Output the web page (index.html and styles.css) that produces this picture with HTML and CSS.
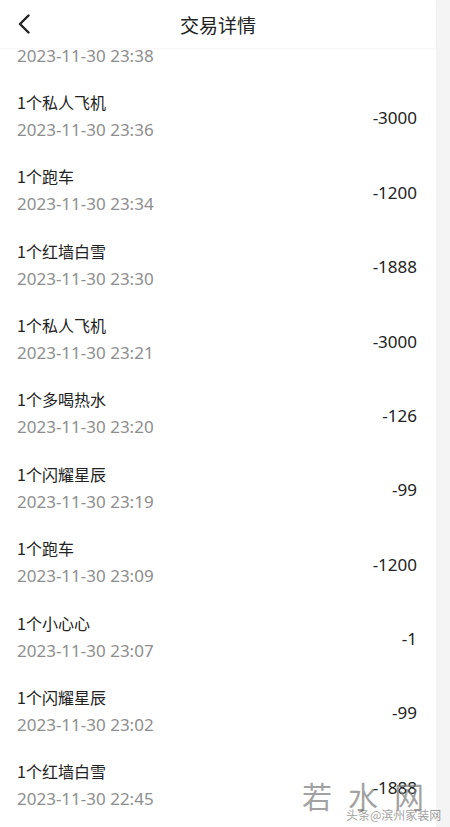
FILE: index.html
```html
<!DOCTYPE html>
<html lang="zh-CN">
<head>
  <meta charset="UTF-8">
  <meta name="viewport" content="width=device-width, initial-scale=1.0">
  <title>交易详情</title>
  <link rel="stylesheet" href="styles.css">
</head>
<body>

  <div class="page">
    <div class="header">
      <svg class="back" width="14" height="20" viewBox="0 0 14 20">
        <path d="M11.5 1.5 L3 10 L11.5 18.5" fill="none" stroke="#222" stroke-width="2.4" stroke-linecap="round" stroke-linejoin="round"/>
      </svg>
      <div class="title">交易详情</div>
    </div>

    <div class="list-wrap">
      <ul class="list">
        <li class="row">
          <div class="info"><div class="name">1个跑车</div><div class="date">2023-11-30 23:38</div></div>
          <div class="amount"></div>
        </li>
        <li class="row">
          <div class="info"><div class="name">1个私人飞机</div><div class="date">2023-11-30 23:36</div></div>
          <div class="amount">-3000</div>
        </li>
        <li class="row">
          <div class="info"><div class="name">1个跑车</div><div class="date">2023-11-30 23:34</div></div>
          <div class="amount">-1200</div>
        </li>
        <li class="row">
          <div class="info"><div class="name">1个红墙白雪</div><div class="date">2023-11-30 23:30</div></div>
          <div class="amount">-1888</div>
        </li>
        <li class="row">
          <div class="info"><div class="name">1个私人飞机</div><div class="date">2023-11-30 23:21</div></div>
          <div class="amount">-3000</div>
        </li>
        <li class="row">
          <div class="info"><div class="name">1个多喝热水</div><div class="date">2023-11-30 23:20</div></div>
          <div class="amount">-126</div>
        </li>
        <li class="row">
          <div class="info"><div class="name">1个闪耀星辰</div><div class="date">2023-11-30 23:19</div></div>
          <div class="amount">-99</div>
        </li>
        <li class="row">
          <div class="info"><div class="name">1个跑车</div><div class="date">2023-11-30 23:09</div></div>
          <div class="amount">-1200</div>
        </li>
        <li class="row">
          <div class="info"><div class="name">1个小心心</div><div class="date">2023-11-30 23:07</div></div>
          <div class="amount">-1</div>
        </li>
        <li class="row">
          <div class="info"><div class="name">1个闪耀星辰</div><div class="date">2023-11-30 23:02</div></div>
          <div class="amount">-99</div>
        </li>
        <li class="row">
          <div class="info"><div class="name">1个红墙白雪</div><div class="date">2023-11-30 22:45</div></div>
          <div class="amount">-1888</div>
        </li>
      </ul>
    </div>
  </div>

  <!-- 水印 -->
  <div class="watermark">
    <div class="wm-big">若水网</div>
    <div class="wm-small">头条@滨州家装网</div>
  </div>

</body>
</html>
```

FILE: styles.css
```css
html, body {
  margin: 0;
  padding: 0;
  height: 100%;
}

body {
  background-color: #f4f4f4;
  font-family: "Noto Sans", "Noto Sans CJK SC", sans-serif;
  color: #222;
  overflow: hidden;
}

.page {
  width: 436px;
  height: 827px;
  background-color: #fff;
  display: flex;
  flex-direction: column;
}

.header {
  height: 48px;
  flex-shrink: 0;
  display: flex;
  align-items: center;
  justify-content: center;
  position: relative;
  z-index: 2;
  background-color: #fff;
  box-shadow: 0 1px 2px rgba(0, 0, 0, 0.05);
}

.back {
  position: absolute;
  left: 17px;
  top: 14px;
}

.title {
  font-family: "Noto Sans CJK SC", sans-serif;
  font-size: 19px;
  color: #222;
}

.list-wrap {
  flex: 1;
  overflow: hidden;
}

.list {
  list-style: none;
  margin: -42.6px 0 0 0;
  padding: 0 19px 0 17px;
}

.row {
  display: flex;
  align-items: center;
  justify-content: space-between;
  padding: 9.2px 0;
  height: 56px;
}

.name {
  font-family: "Noto Sans CJK SC", sans-serif;
  font-size: 16px;
  line-height: 26px;
  color: #222;
}

.date {
  font-size: 17px;
  line-height: 30px;
  color: #8e8e8e;
}

.amount {
  font-size: 17px;
  color: #222;
  padding-top: 2px;
}

.watermark {
  position: absolute;
  left: 302px;
  top: 777px;
  pointer-events: none;
  white-space: nowrap;
}

.wm-big {
  font-family: "Noto Sans CJK SC", sans-serif;
  font-size: 30px;
  letter-spacing: 16px;
  line-height: 36px;
  color: rgba(120, 120, 120, 0.7);
}

.wm-small {
  font-family: "Noto Sans CJK SC", sans-serif;
  font-size: 12px;
  line-height: 16px;
  color: rgba(60, 60, 60, 0.5);
  margin: -6px 0 0 44px;
}
```
